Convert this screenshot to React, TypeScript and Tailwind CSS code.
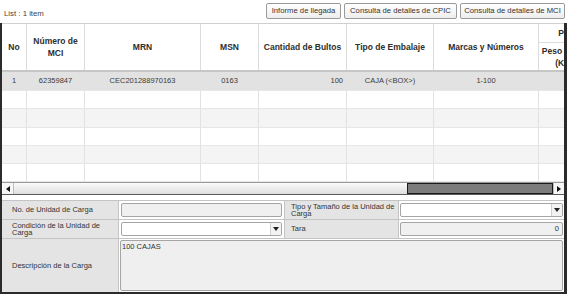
import React from "react";

const Tri = ({ dir }: { dir: "l" | "r" | "d" }) => {
  if (dir === "l")
    return (
      <svg width="4" height="6" viewBox="0 0 4 6">
        <path d="M4 0 L0 3 L4 6 Z" fill="#111" />
      </svg>
    );
  if (dir === "r")
    return (
      <svg width="4" height="6" viewBox="0 0 4 6">
        <path d="M0 0 L4 3 L0 6 Z" fill="#111" />
      </svg>
    );
  return (
    <svg width="6" height="4" viewBox="0 0 6 4">
      <path d="M0 0 L6 0 L3 4 Z" fill="#222" />
    </svg>
  );
};

const rowHeights = ["h-[19px]", "h-[18px]", "h-[19px]", "h-[18px]", "h-[18px]", "h-[18px]"];
const rowBgs = ["bg-[#e2e2e2]", "bg-white", "bg-[#f4f4f4]", "bg-white", "bg-[#f4f4f4]", "bg-white"];

export default function App() {
  const hc = "flex items-center justify-center text-center border-r border-[#dcdcdc] font-bold text-[8.5px] leading-[12px] text-[#2e2e2e] px-[2px]";
  const dc = "flex items-center border-r border-[#e2e2e2] px-[3px]";
  return (
    <div className="w-[567px] h-[295px] bg-white overflow-hidden font-['Liberation_Sans',Arial,sans-serif] text-[#333]">
      {/* top bar */}
      <div className="h-[23px] flex items-start justify-between pl-[4px] pr-[2px]">
        <div className="pt-[9px] text-[7.8px] leading-[10px] text-[#444]">List : 1 item</div>
        <div className="flex gap-[3px] pt-[3px]">
          <div className="w-[75px] h-[16px] flex items-center justify-center border border-[#9a9a9a] rounded-[2px] bg-gradient-to-b from-white to-[#eeeeee] text-[7.7px] text-[#333]">Informe de llegada</div>
          <div className="w-[113px] h-[16px] flex items-center justify-center border border-[#9a9a9a] rounded-[2px] bg-gradient-to-b from-white to-[#eeeeee] text-[7.7px] text-[#333]">Consulta de detalles de CPIC</div>
          <div className="w-[105px] h-[16px] flex items-center justify-center border border-[#9a9a9a] rounded-[2px] bg-gradient-to-b from-white to-[#eeeeee] text-[7.7px] text-[#333]">Consulta de detalles de MCI</div>
        </div>
      </div>

      {/* framed area */}
      <div className="h-[271px] flex flex-col border-l-2 border-r-[3px] border-b-2 border-[#2b2b2b]">
        {/* grid */}
        <div className="overflow-hidden">
          <div className="w-[600px]">
            {/* header */}
            <div className="flex h-[49px] border-t border-[#cfcfcf] border-b-2 border-b-[#c6c6c6] bg-white">
              <div className={`${hc} w-[25px]`}>No</div>
              <div className={`${hc} w-[58px]`}>Número de MCI</div>
              <div className={`${hc} w-[116px]`}>MRN</div>
              <div className={`${hc} w-[58px]`}>MSN</div>
              <div className={`${hc} w-[88px]`}>Cantidad de Bultos</div>
              <div className={`${hc} w-[87px]`}>Tipo de Embalaje</div>
              <div className={`${hc} w-[105px]`}>Marcas y Números</div>
              <div className="w-[50px] flex flex-col border-r border-[#dcdcdc]">
                <div className="h-[19px] flex items-center justify-center pl-[10px] border-b border-[#dcdcdc] font-bold text-[8.5px] text-[#2e2e2e]">Peso</div>
                <div className="flex-1 flex items-center justify-center text-center font-bold text-[8.5px] leading-[12px] text-[#2e2e2e] pl-[2px]">Peso Bruto (KG)</div>
              </div>
            </div>
            {/* rows */}
            {rowHeights.map((h, i) => (
              <div key={i} className={`flex ${h} ${rowBgs[i]} border-b border-[#e6e6e6] text-[7.5px] text-[#3a3a3a]`}>
                <div className={`${dc} w-[25px] justify-center`}>{i === 0 ? "1" : ""}</div>
                <div className={`${dc} w-[58px] justify-center`}>{i === 0 ? "62359847" : ""}</div>
                <div className={`${dc} w-[116px] justify-center`}>{i === 0 ? "CEC201288970163" : ""}</div>
                <div className={`${dc} w-[58px] justify-center`}>{i === 0 ? "0163" : ""}</div>
                <div className={`${dc} w-[88px] justify-end`}>{i === 0 ? "100" : ""}</div>
                <div className={`${dc} w-[87px] justify-center`}>{i === 0 ? "CAJA (<BOX>)" : ""}</div>
                <div className={`${dc} w-[105px] justify-center`}>{i === 0 ? "1-100" : ""}</div>
                <div className={`${dc} w-[50px]`}></div>
              </div>
            ))}
          </div>
        </div>
        {/* horizontal scrollbar */}
        <div className="h-[13px] flex border-t border-[#9a9a9a] border-b border-b-[#5a5a5a] pl-[1px]">
          <div className="w-[11px] flex items-center justify-center bg-[#f6f6f6] border-r border-[#bdbdbd]">
            <Tri dir="l" />
          </div>
          <div className="flex-1 flex bg-gradient-to-b from-[#fbfbfb] to-[#dedede]">
            <div className="flex-1"></div>
            <div className="w-[146px] bg-[#7c7c7c] border border-[#1a1a1a]"></div>
          </div>
          <div className="w-[11px] flex items-center justify-center bg-[#f6f6f6] border-l border-[#bdbdbd]">
            <Tri dir="r" />
          </div>
        </div>

        <div className="h-[5px]"></div>

        {/* form */}
        <div className="flex-1 flex flex-col border-t border-[#c4c4c4] text-[7.5px] text-[#333]">
          <div className="flex h-[19px] border-b border-[#c4c4c4]">
            <div className="w-[117px] bg-[#e4e4e4] border-r border-[#c4c4c4] flex items-center pl-[10px]">No. de Unidad de Carga</div>
            <div className="w-[166px] bg-white px-[2px] py-[2px] border-r border-[#c4c4c4]">
              <div className="h-full border border-[#a5a5a5] rounded-[2px] bg-[#f0f0f0]"></div>
            </div>
            <div className="w-[114px] bg-[#e4e4e4] border-r border-[#c4c4c4] flex items-center pl-[6px] leading-[7px]">Tipo y Tamaño de la Unidad de Carga</div>
            <div className="flex-1 bg-white px-[1px] py-[2px]">
              <div className="h-full flex border border-[#a5a5a5] rounded-[2px] bg-white">
                <div className="flex-1"></div>
                <div className="w-[11px] flex items-center justify-center border-l border-[#cfcfcf] bg-[#f3f3f3]">
                  <Tri dir="d" />
                </div>
              </div>
            </div>
          </div>
          <div className="flex h-[19px] border-b border-[#c4c4c4]">
            <div className="w-[117px] bg-[#e4e4e4] border-r border-[#c4c4c4] flex items-center pl-[10px] leading-[7px]">Condición de la Unidad de Carga</div>
            <div className="w-[166px] bg-white px-[2px] py-[2px] border-r border-[#c4c4c4]">
              <div className="h-full flex border border-[#a5a5a5] rounded-[2px] bg-white">
                <div className="flex-1"></div>
                <div className="w-[11px] flex items-center justify-center border-l border-[#cfcfcf] bg-[#f3f3f3]">
                  <Tri dir="d" />
                </div>
              </div>
            </div>
            <div className="w-[114px] bg-[#e4e4e4] border-r border-[#c4c4c4] flex items-center pl-[6px]">Tara</div>
            <div className="flex-1 bg-white px-[1px] py-[2px]">
              <div className="h-full flex items-center justify-end pr-[3px] border border-[#a5a5a5] rounded-[2px] bg-[#f0f0f0]">0</div>
            </div>
          </div>
          <div className="flex flex-1">
            <div className="w-[117px] bg-[#e4e4e4] border-r border-[#c4c4c4] flex items-center pl-[10px]">Descripción de la Carga</div>
            <div className="flex-1 bg-white px-[1px] py-[1px]">
              <div className="h-full border border-[#a5a5a5] rounded-[2px] bg-[#efefef] px-[1px] pt-[1px] leading-[9px]">100 CAJAS</div>
            </div>
          </div>
        </div>
      </div>
    </div>
  );
}
